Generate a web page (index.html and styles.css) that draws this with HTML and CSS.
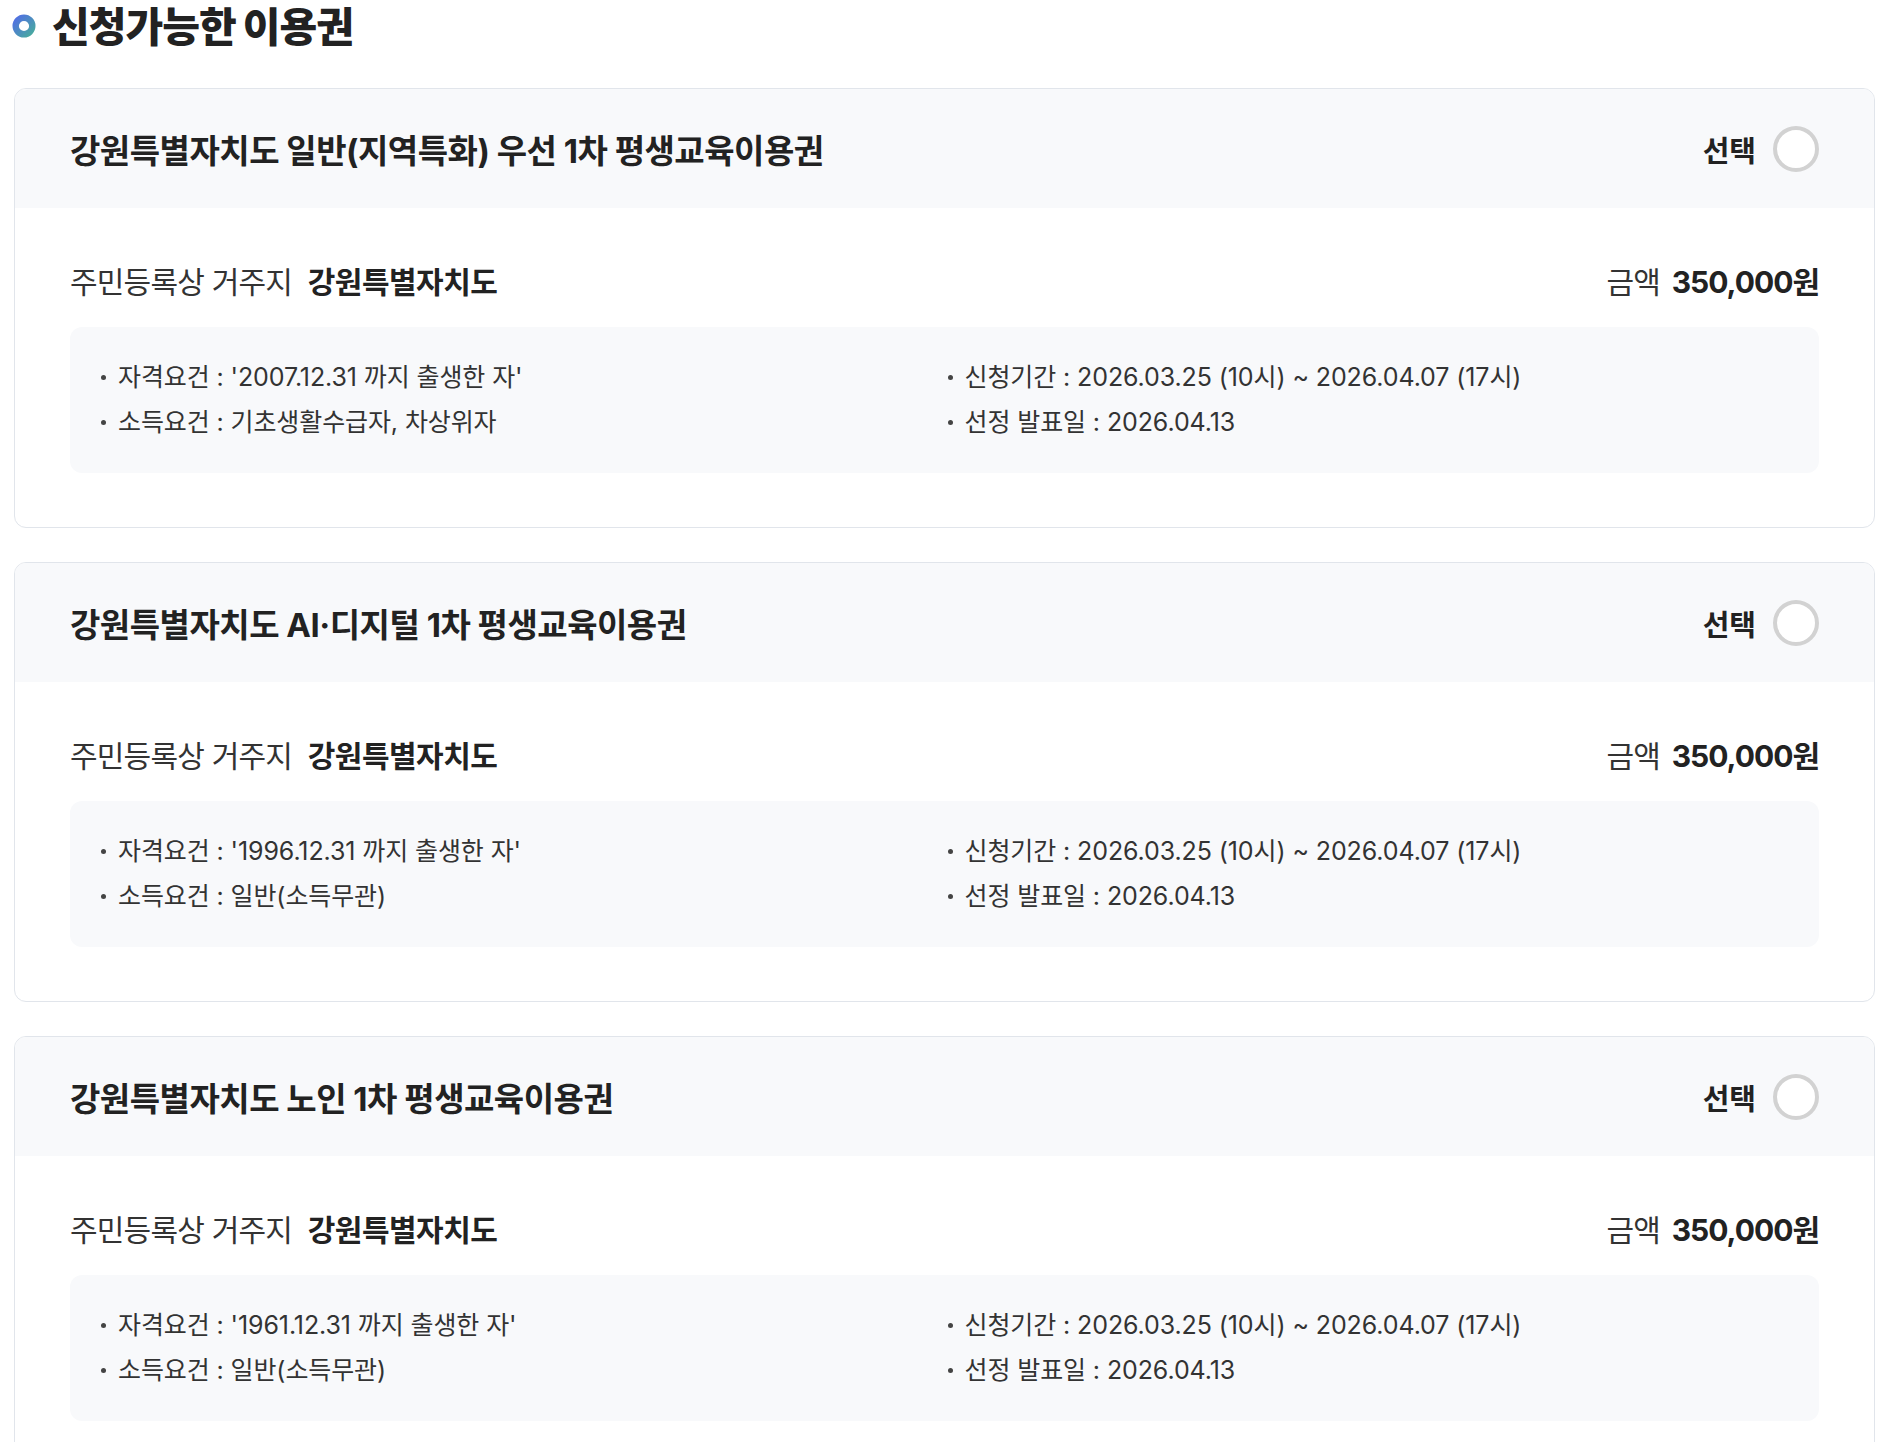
FILE: index.html
```html
<!DOCTYPE html>
<html lang="ko">
  <head>
    <meta charset="UTF-8" />
    <meta name="viewport" content="width=device-width, initial-scale=1.0" />
    <title>신청가능한 이용권</title>
    <link rel="stylesheet" href="styles.css">
  </head>
  <body>
    <h2 class="section-title">
      <svg class="title-ring" width="24" height="24" viewBox="0 0 24 24">
        <defs>
          <linearGradient id="ring-grad" x1="0" y1="0" x2="1" y2="1">
            <stop offset="0" stop-color="#5170e2" />
            <stop offset="1" stop-color="#48a9a0" />
          </linearGradient>
        </defs>
        <circle cx="12" cy="12" r="8.3" fill="none" stroke="url(#ring-grad)" stroke-width="6.4" />
      </svg>
      신청가능한 이용권
    </h2>

    <div class="voucher-list">
      <div class="voucher">
        <div class="voucher-head">
          <span class="voucher-name">강원특별자치도 일반(지역특화) 우선 1차 평생교육이용권</span>
          <label class="voucher-pick">선택 <span class="radio"></span></label>
        </div>
        <div class="voucher-body">
          <div class="voucher-row">
            <span class="region">주민등록상 거주지 <strong>강원특별자치도</strong></span>
            <span class="amount">금액 <strong>350,000원</strong></span>
          </div>
          <div class="info-box">
            <ul class="info-list">
              <li>자격요건 : '2007.12.31 까지 출생한 자'</li>
              <li>소득요건 : 기초생활수급자, 차상위자</li>
            </ul>
            <ul class="info-list">
              <li>신청기간 : 2026.03.25 (10시) ~ 2026.04.07 (17시)</li>
              <li>선정 발표일 : 2026.04.13</li>
            </ul>
          </div>
        </div>
      </div>

      <div class="voucher">
        <div class="voucher-head">
          <span class="voucher-name">강원특별자치도 AI·디지털 1차 평생교육이용권</span>
          <label class="voucher-pick">선택 <span class="radio"></span></label>
        </div>
        <div class="voucher-body">
          <div class="voucher-row">
            <span class="region">주민등록상 거주지 <strong>강원특별자치도</strong></span>
            <span class="amount">금액 <strong>350,000원</strong></span>
          </div>
          <div class="info-box">
            <ul class="info-list">
              <li>자격요건 : '1996.12.31 까지 출생한 자'</li>
              <li>소득요건 : 일반(소득무관)</li>
            </ul>
            <ul class="info-list">
              <li>신청기간 : 2026.03.25 (10시) ~ 2026.04.07 (17시)</li>
              <li>선정 발표일 : 2026.04.13</li>
            </ul>
          </div>
        </div>
      </div>

      <div class="voucher">
        <div class="voucher-head">
          <span class="voucher-name">강원특별자치도 노인 1차 평생교육이용권</span>
          <label class="voucher-pick">선택 <span class="radio"></span></label>
        </div>
        <div class="voucher-body">
          <div class="voucher-row">
            <span class="region">주민등록상 거주지 <strong>강원특별자치도</strong></span>
            <span class="amount">금액 <strong>350,000원</strong></span>
          </div>
          <div class="info-box">
            <ul class="info-list">
              <li>자격요건 : '1961.12.31 까지 출생한 자'</li>
              <li>소득요건 : 일반(소득무관)</li>
            </ul>
            <ul class="info-list">
              <li>신청기간 : 2026.03.25 (10시) ~ 2026.04.07 (17시)</li>
              <li>선정 발표일 : 2026.04.13</li>
            </ul>
          </div>
        </div>
      </div>
    </div>
  </body>
</html>
```

FILE: styles.css
```css
body {
  font-family: "Inter", "Noto Sans CJK KR", sans-serif;
  background-color: #fff;
  color: #333;
  margin: 0;
  padding: 0 7px 0 12px;
}

.section-title {
  display: flex;
  align-items: center;
  gap: 16px;
  margin: 0 0 40px;
  height: 48px;
  font-size: 41px;
  font-weight: 900;
  letter-spacing: -1px;
  color: #222;
}

.title-ring {
  margin-top: 4px;
}

.voucher-list {
  display: flex;
  flex-direction: column;
  gap: 34px;
  margin-left: 2px;
}

.voucher {
  border: 1px solid #e1e5eb;
  border-radius: 12px;
  overflow: hidden;
  background: #fff;
}

.voucher-head {
  display: flex;
  justify-content: space-between;
  align-items: center;
  height: 119px;
  padding: 0 55px;
  background-color: #f8f9fb;
}

.voucher-name {
  font-size: 33px;
  font-weight: 700;
  letter-spacing: -0.5px;
  color: #222;
}

.voucher-pick {
  display: flex;
  align-items: center;
  gap: 17px;
  font-size: 29px;
  font-weight: 700;
  color: #222;
  cursor: pointer;
}

.radio {
  width: 46px;
  height: 46px;
  box-sizing: border-box;
  border: 4px solid #d2d2d2;
  border-radius: 50%;
  background: #fff;
}

.voucher-body {
  padding: 55px 55px 54px;
}

.voucher-row {
  display: flex;
  justify-content: space-between;
  align-items: center;
  line-height: 38px;
  margin-bottom: 26px;
  font-size: 30px;
  letter-spacing: -0.8px;
  color: #333;
}

.voucher-row strong {
  margin-left: 8px;
  font-weight: 700;
  letter-spacing: -0.5px;
  color: #222;
}

.amount strong {
  margin-left: 4px;
  letter-spacing: -1px;
}

.info-box {
  display: grid;
  grid-template-columns: 1fr 1fr;
  column-gap: 6px;
  padding: 28px 31px;
  background-color: #f8f9fb;
  border-radius: 12px;
}

.info-list {
  list-style: none;
  margin: 0;
  padding: 0;
}

.info-list li {
  display: flex;
  align-items: center;
  gap: 12px;
  font-size: 25px;
  line-height: 45px;
  letter-spacing: -0.1px;
  color: #333;
}

.info-list li::before {
  content: "";
  width: 5px;
  height: 5px;
  border-radius: 50%;
  background: #444;
}
```
